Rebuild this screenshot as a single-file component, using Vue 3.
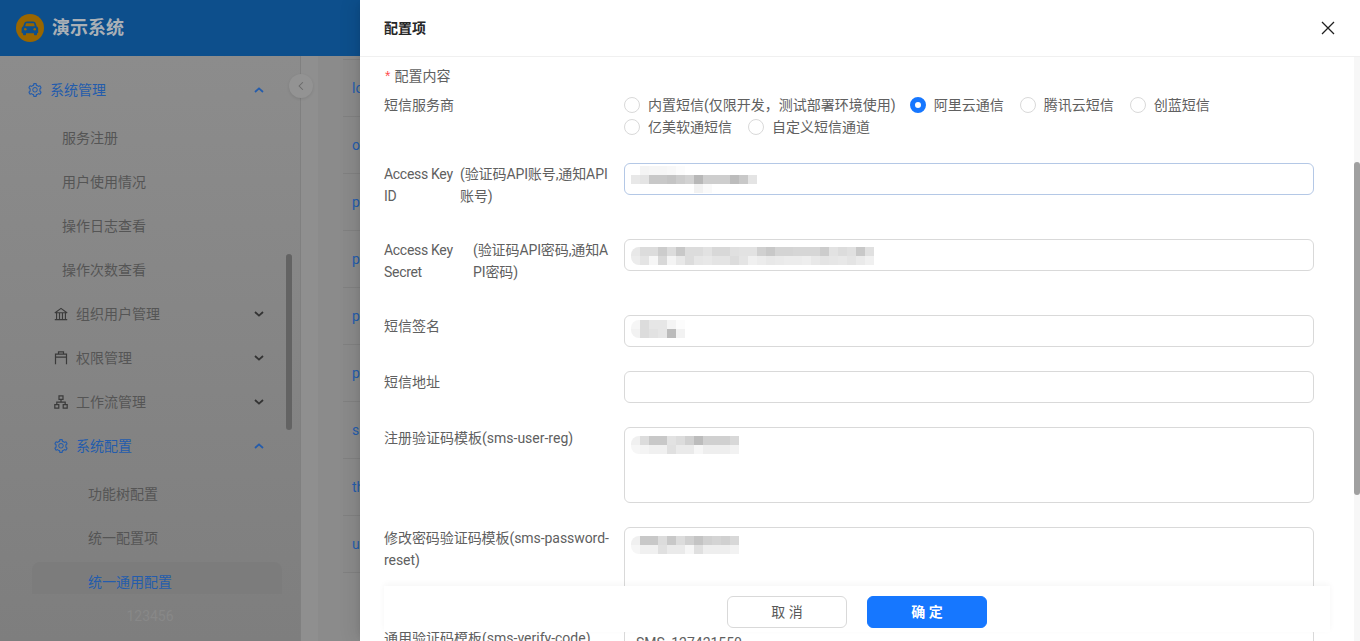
<script setup>
const GEAR = 'M924.8 625.7l-65.5-56c3.1-19 4.7-38.4 4.7-57.8s-1.6-38.8-4.7-57.8l65.5-56a32.03 32.03 0 0 0 9.3-35.2l-.9-2.6a443.74 443.74 0 0 0-79.7-137.9l-1.8-2.1a32.12 32.12 0 0 0-35.1-9.5l-81.3 28.9c-30-24.6-63.5-44-99.7-57.6l-15.7-85a32.05 32.05 0 0 0-25.8-25.7l-2.7-.5c-52.1-9.4-106.9-9.4-159 0l-2.7.5a32.05 32.05 0 0 0-25.8 25.7l-15.8 85.4a351.86 351.86 0 0 0-99 57.4l-81.9-29.1a32 32 0 0 0-35.1 9.5l-1.8 2.1a446.02 446.02 0 0 0-79.7 137.9l-.9 2.6c-4.5 12.5-.8 26.5 9.3 35.2l66.3 56.6c-3.1 18.8-4.6 38-4.6 57.1 0 19.2 1.5 38.4 4.6 57.1L99 625.5a32.03 32.03 0 0 0-9.3 35.2l.9 2.6c18.1 50.4 44.9 96.9 79.7 137.9l1.8 2.1a32.12 32.12 0 0 0 35.1 9.5l81.9-29.1c29.8 24.5 63.1 43.9 99 57.4l15.8 85.4a32.05 32.05 0 0 0 25.8 25.7l2.7.5a449.4 449.4 0 0 0 159 0l2.7-.5a32.05 32.05 0 0 0 25.8-25.7l15.7-85a350 350 0 0 0 99.7-57.6l81.3 28.9a32 32 0 0 0 35.1-9.5l1.8-2.1c34.8-41.1 61.6-87.5 79.7-137.9l.9-2.6c4.5-12.3.8-26.3-9.3-35zM788.3 465.9c2.5 15.1 3.8 30.6 3.8 46.1s-1.3 31-3.8 46.1l-6.6 40.1 74.7 63.9a370.03 370.03 0 0 1-42.6 73.6L721 702.8l-31.4 25.8c-23.9 19.6-50.5 35-79.3 45.8l-38.1 14.3-17.9 97a377.5 377.5 0 0 1-85 0l-17.9-97.2-37.8-14.5c-28.5-10.8-55-26.2-78.7-45.7l-31.4-25.9-93.4 33.2c-17-22.9-31.2-47.6-42.6-73.6l75.5-64.5-6.5-40c-2.4-14.9-3.7-30.3-3.7-45.5 0-15.3 1.2-30.6 3.7-45.5l6.5-40-75.5-64.5c11.3-26.1 25.6-50.7 42.6-73.6l93.4 33.2 31.4-25.9c23.7-19.5 50.2-34.9 78.7-45.7l37.9-14.3 17.9-97.2c28.1-3.2 56.8-3.2 85 0l17.9 97 38.1 14.3c28.7 10.8 55.4 26.2 79.3 45.8l31.4 25.8 92.8-32.9c17 22.9 31.2 47.6 42.6 73.6L781.8 426l6.5 39.9zM512 326c-97.2 0-176 78.8-176 176s78.8 176 176 176 176-78.8 176-176-78.8-176-176-176zm79.2 255.2A111.6 111.6 0 0 1 512 614c-29.9 0-58-11.7-79.2-32.8A111.6 111.6 0 0 1 400 502c0-29.9 11.7-58 32.8-79.2C454 401.6 482.1 390 512 390c29.9 0 58 11.6 79.2 32.8A111.6 111.6 0 0 1 624 502c0 29.9-11.7 58-32.8 79.2z'
const BANK = 'M894 462c30.9 0 43.8-39.7 18.7-58L530.8 126.2a31.81 31.81 0 0 0-37.6 0L111.3 404c-25.1 18.2-12.2 58 18.8 58H192v374h-72c-4.4 0-8 3.6-8 8v52c0 4.4 3.6 8 8 8h784c4.4 0 8-3.6 8-8v-52c0-4.4-3.6-8-8-8h-72V462h62zM512 196.7l271.1 197.2H240.9L512 196.7zM264 462h117v374H264V462zm189 0h117v374H453V462zm307 374H642V462h118v374z'

const menu = [
  { t: '系统管理', level: 0, icon: 'gear', open: true, blue: true },
  { t: '服务注册', level: 1 },
  { t: '用户使用情况', level: 1 },
  { t: '操作日志查看', level: 1 },
  { t: '操作次数查看', level: 1 },
  { t: '组织用户管理', level: 2, icon: 'bank', closed: true },
  { t: '权限管理', level: 2, icon: 'perm', closed: true },
  { t: '工作流管理', level: 2, icon: 'flow', closed: true },
  { t: '系统配置', level: 2, icon: 'gear', open: true, blue: true },
  { t: '功能树配置', level: 3 },
  { t: '统一配置项', level: 3 },
  { t: '统一通用配置', level: 3, active: true }
]
const rows = ['login', 'oss', 'password', 'portal', 'push', 'platform', 'sms', 'theme', 'upload']
const radios = [
  { t: '内置短信(仅限开发，测试部署环境使用)' },
  { t: '阿里云通信', on: true },
  { t: '腾讯云短信' },
  { t: '创蓝短信' },
  { t: '亿美软通短信' },
  { t: '自定义短信通道' }
]
const shade = (v) => `#${v}${v}${v}`
const mosaics = {
  key: [
    ['ff', 'f4', 'f6', 'f6', 'f8', 'fc', 'ff', 'ff', 'ff', 'ff', 'ff', 'ff', 'ff', 'ff'],
    ['e8', 'e4', 'c8', 'c8', 'c4', 'cc', 'd2', 'b8', 'ce', 'ce', 'ce', 'bc', 'c8', 'e4'],
    ['ff', 'ff', 'ff', 'ff', 'ff', 'ff', 'ff', 'f2', 'fa', 'ff', 'ff', 'ff', 'ff', 'ff']
  ],
  secret: [
    ['e8', 'dc', 'dc', 'cc', 'dc', 'c8', 'dc', 'dc', 'e2', 'd8', 'd8', 'e0', 'e2', 'e2', 'd0', 'c8', 'd4', 'd4', 'd6', 'd6', 'd6', 'cc', 'e2', 'dc', 'e0', 'c8', 'e0'],
    ['ec', 'e4', 'f6', 'd8', 'f4', 'e8', 'dc', 'e6', 'e8', 'e4', 'e4', 'dc', 'e4', 'f0', 'ec', 'e8', 'ea', 'ec', 'ec', 'ee', 'e8', 'e4', 'e6', 'e8', 'e4', 'ea', 'f0']
  ],
  sign: [
    ['f6', 'dc', 'e6', 'e6', 'f4', 'fc'],
    ['f2', 'dc', 'e2', 'e6', 'bb', 'f2']
  ],
  tplA: [
    ['f0', 'dc', 'c8', 'c8', 'e2', 'dc', 'd0', 'bc', 'd0', 'd0', 'd0', 'd8'],
    ['f6', 'f4', 'f0', 'f0', 'e0', 'ea', 'ea', 'f6', 'ee', 'ee', 'ee', 'f2']
  ],
  tplB: [
    ['f0', 'c8', 'c8', 'dc', 'c8', 'dc', 'd0', 'c4', 'd0', 'd4', 'd0', 'd8'],
    ['f6', 'f0', 'f0', 'e0', 'ea', 'ea', 'f6', 'e0', 'ee', 'ee', 'ee', 'f2']
  ]
}
</script>

<template>
  <div class="page">
    <header class="topbar">
      <svg class="logo" viewBox="0 0 28 28" width="28" height="28">
        <circle cx="14" cy="14" r="14" fill="#996600" />
        <path d="M8.2 9.6c.4-1.4 1.3-2.2 2.8-2.2h6c1.500 0 2.400.8 2.800 2.200l.9 3c1 .4 1.500 1.200 1.500 2.200v3.600c0 .5-.3.800-.8.800H21v1.300c0 .5-.3.800-.8.800h-1.400c-.5 0-.8-.3-.8-.8v-1.300H10v1.300c0 .5-.3.800-.8.800H7.800c-.5 0-.8-.3-.8-.8v-1.300h-.6c-.5 0-.8-.3-.8-.8v-3.600c0-1 .5-1.800 1.500-2.200z" fill="#0d4f8c" />
        <path d="M10 9.300h8l.8 2.900H9.200z" fill="#996600" />
        <circle cx="9.300" cy="15.300" r="1.300" fill="#996600" />
        <circle cx="18.700" cy="15.300" r="1.300" fill="#996600" />
      </svg>
      <span class="brand">演示系统</span>
    </header>

    <div class="under">
      <aside class="side">
        <nav class="nav">
          <div
            v-for="m in menu"
            :key="m.t"
            class="item"
            :class="['lv' + m.level, { blue: m.blue || m.active, active: m.active, opened: m.open }]"
          >
            <svg v-if="m.icon === 'gear'" class="ico" viewBox="64 64 896 896"><path :d="GEAR" fill="currentColor" /></svg>
            <svg v-else-if="m.icon === 'bank'" class="ico" viewBox="64 64 896 896"><path :d="BANK" fill="currentColor" /></svg>
            <svg v-else-if="m.icon === 'perm'" class="ico" viewBox="0 0 14 14">
              <path d="M4.500 .8h5v2.400h-5zM1.500 13.200V3.200h11v10M1.500 6.200h11" fill="none" stroke="currentColor" stroke-width="1.200" />
            </svg>
            <svg v-else-if="m.icon === 'flow'" class="ico" viewBox="0 0 14 14">
              <path d="M5 .8h4v3.600H5zM.8 9.600h4v3.600h-4zM9.200 9.600h4v3.600h-4zM7 4.400v2.800M2.800 9.600V7.200h8.400v2.400" fill="none" stroke="currentColor" stroke-width="1.200" />
            </svg>
            <span class="label">{{ m.t }}</span>
            <svg v-if="m.open || m.closed" class="chev" viewBox="0 0 10 6" :class="{ up: m.open }">
              <path d="M1 1l4 3.600L9 1" fill="none" stroke="currentColor" stroke-width="1.800" />
            </svg>
          </div>
        </nav>
        <div class="version">123456</div>
        <div class="side-thumb"></div>
      </aside>
      <main class="main">
        <button class="collapse" type="button" aria-label="collapse">
          <svg viewBox="0 0 8 12" width="6" height="10"><path d="M6.500 1L1.500 6l5 5" fill="none" stroke="#6a6a6a" stroke-width="1.400" /></svg>
        </button>
        <div class="table">
          <div v-for="r in rows" :key="r" class="tr">{{ r }}</div>
        </div>
      </main>
    </div>

    <section class="drawer">
      <div class="drawer-head">
        <span class="title">配置项</span>
        <svg class="close" viewBox="0 0 14 14" width="14" height="14"><path d="M1 1l12 12M13 1L1 13" fill="none" stroke="#1f1f1f" stroke-width="1.300" /></svg>
      </div>
      <div class="drawer-body">
        <div class="form">
          <div class="req"><i>*</i>配置内容</div>

          <div class="row radios-row">
            <div class="lab">短信服务商</div>
            <div class="ctl radios">
              <label v-for="r in radios" :key="r.t" class="radio">
                <span class="dot" :class="{ on: r.on }"></span>
                <span class="rtext">{{ r.t }}</span>
              </label>
            </div>
          </div>

          <div class="row">
            <div class="lab split">
              <span class="s1 w1">Access Key<br />ID</span>
              <span class="s2">(验证码API账号,通知API<br />账号)</span>
            </div>
            <div class="ctl">
              <div class="input focus">
                <div class="mosaic">
                  <div v-for="(l, n) in mosaics.key" :key="n" class="mline">
                    <span v-for="(c, i) in l" :key="i" class="cell" :style="{ background: shade(c) }"></span>
                  </div>
                </div>
              </div>
            </div>
          </div>

          <div class="row">
            <div class="lab split">
              <span class="s1 w2">Access Key<br />Secret</span>
              <span class="s2">(验证码API密码,通知A<br />PI密码)</span>
            </div>
            <div class="ctl">
              <div class="input">
                <div class="mosaic">
                  <div v-for="(l, n) in mosaics.secret" :key="n" class="mline">
                    <span v-for="(c, i) in l" :key="i" class="cell" :style="{ background: shade(c) }"></span>
                  </div>
                </div>
              </div>
            </div>
          </div>

          <div class="row">
            <div class="lab">短信签名</div>
            <div class="ctl">
              <div class="input">
                <div class="mosaic m-sign">
                  <div v-for="(l, n) in mosaics.sign" :key="n" class="mline">
                    <span v-for="(c, i) in l" :key="i" class="cell" :style="{ background: shade(c) }"></span>
                  </div>
                </div>
              </div>
            </div>
          </div>

          <div class="row">
            <div class="lab">短信地址</div>
            <div class="ctl"><div class="input"></div></div>
          </div>

          <div class="row">
            <div class="lab">注册验证码模板(sms-user-reg)</div>
            <div class="ctl">
              <div class="input area">
                <div class="mosaic">
                  <div v-for="(l, n) in mosaics.tplA" :key="n" class="mline">
                    <span v-for="(c, i) in l" :key="i" class="cell" :style="{ background: shade(c) }"></span>
                  </div>
                </div>
              </div>
            </div>
          </div>

          <div class="row">
            <div class="lab tight">修改密码验证码模板(sms-password-<br />reset)</div>
            <div class="ctl">
              <div class="input area">
                <div class="mosaic">
                  <div v-for="(l, n) in mosaics.tplB" :key="n" class="mline">
                    <span v-for="(c, i) in l" :key="i" class="cell" :style="{ background: shade(c) }"></span>
                  </div>
                </div>
              </div>
            </div>
          </div>

          <div class="row">
            <div class="lab">通用验证码模板(sms-verify-code)</div>
            <div class="ctl"><div class="input plain">SMS_127421550</div></div>
          </div>
        </div>
        <div class="vbar"><div class="vthumb"></div></div>
      </div>
      <div class="footer">
        <button class="btn" type="button">取 消</button>
        <button class="btn primary" type="button">确 定</button>
      </div>
    </section>
  </div>
</template>

<style scoped>
.page {
  position: relative;
  width: 1360px;
  height: 641px;
  overflow: hidden;
  display: flex;
  flex-direction: column;
  background: #8a8a8a;
  font-family: Roboto, "Noto Sans CJK SC", sans-serif;
  font-size: 14px;
  line-height: 22px;
  color: #606060;
}
.topbar {
  flex: none;
  height: 56px;
  background: #0d4f8c;
  display: flex;
  align-items: center;
  gap: 8px;
  padding-left: 16px;
  box-sizing: border-box;
}
.brand {
  font-size: 18px;
  font-weight: 700;
  color: #aab0b6;
}
.under {
  flex: 1;
  min-height: 0;
  display: flex;
}
.side {
  position: relative;
  width: 300px;
  flex: none;
  background: linear-gradient(#8c8c8c, #7e7e7e);
  display: flex;
  flex-direction: column;
  border-right: 1px solid #808080;
}
.nav {
  height: 538px;
  overflow: hidden;
  padding: 14px 18px 0 32px;
  box-sizing: border-box;
  flex: none;
}
.item {
  height: 40px;
  margin-bottom: 4px;
  margin-left: -32px;
  display: flex;
  align-items: center;
  box-sizing: border-box;
  color: #555;
  border-radius: 8px;
}
.item.opened { margin-bottom: 8px; }
.lv0 { padding-left: 28px; width: 268px; }
.lv1 { padding-left: 62px; width: 250px; }
.lv2 { padding-left: 54px; width: 268px; }
.lv3 { padding-left: 88px; width: 250px; }
.item.blue { color: #245cac; }
.lv3.active {
  margin-left: 0;
  padding-left: 56px;
  background: #7c7c7c;
}
.ico {
  width: 14px;
  height: 14px;
  margin-right: 8px;
  flex: none;
  color: #3a3a3a;
}
.item.blue .ico { color: #245cac; }
.chev {
  width: 10px;
  height: 6px;
  margin-left: auto;
  margin-right: 4px;
  color: #333;
}
.chev.up { transform: rotate(180deg); color: #245cac; }
.version {
  flex: 1;
  text-align: center;
  color: #888;
  padding-top: 11px;
}
.side-thumb {
  position: absolute;
  left: 286px;
  top: 198px;
  width: 6px;
  height: 176px;
  border-radius: 3px;
  background: #636363;
}
.main {
  position: relative;
  flex: 1;
  background: linear-gradient(90deg, #8f8f8f 0 17px, #8b8b8b 17px);
  padding: 3px 0 0 42px;
}
.collapse {
  position: absolute;
  left: -12px;
  top: 18px;
  width: 24px;
  height: 24px;
  border: 0;
  border-radius: 50%;
  background: #939393;
  padding: 0;
  display: flex;
  align-items: center;
  justify-content: center;
  box-shadow: 0 1px 3px rgba(0, 0, 0, .1);
}
.table {
  border-top: 1px solid #808080;
  background: #8a8a8a;
}
.tr {
  height: 57px;
  box-sizing: border-box;
  border-bottom: 1px solid #808080;
  padding-left: 9px;
  display: flex;
  align-items: center;
  color: #245cac;
}
.drawer {
  position: absolute;
  right: 0;
  top: 0;
  bottom: 0;
  width: 1000px;
  background: #fff;
  box-shadow: -6px 0 16px rgba(0, 0, 0, .08), -3px 0 6px -4px rgba(0, 0, 0, .12);
  display: flex;
  flex-direction: column;
}
.drawer-head {
  flex: none;
  height: 57px;
  box-sizing: border-box;
  border-bottom: 1px solid #f0f0f0;
  display: flex;
  align-items: center;
  justify-content: space-between;
  padding: 0 25px 0 24px;
}
.title {
  font-weight: 600;
  color: #262626;
}
.drawer-body {
  position: relative;
  flex: 1;
  min-height: 0;
  overflow: hidden;
}
.form {
  width: 930px;
  padding: 8px 0 0 24px;
}
.req {
  height: 22px;
  margin-bottom: 7px;
}
.req i {
  font-style: normal;
  color: #ff4d4f;
  font-family: "Liberation Sans", sans-serif;
  margin: 0 4px 0 1px;
}
.row {
  display: flex;
  gap: 16px;
  margin-bottom: 24px;
}
.radios-row { margin-bottom: 25px; }
.lab {
  width: 224px;
  flex: none;
  padding-bottom: 8px;
  white-space: nowrap;
}
.lab.tight { letter-spacing: -.06px; }
.split { display: flex; }
.s1 { letter-spacing: -.3px; flex: none; }
.s1.w1 { width: 76px; }
.s1.w2 { width: 89px; }
.s2 { flex: 1; letter-spacing: -.1px; }
.ctl {
  flex: 1;
  min-width: 0;
}
.radios {
  display: flex;
  flex-wrap: wrap;
  align-content: flex-start;
}
.radio {
  display: inline-flex;
  align-items: center;
  margin-right: 8px;
  height: 22px;
}
.radio:first-child { margin-right: 6px; }
.dot {
  width: 16px;
  height: 16px;
  box-sizing: border-box;
  border: 1px solid #d9d9d9;
  border-radius: 50%;
  background: #fff;
  flex: none;
}
.dot.on { border: 5px solid #1677ff; }
.rtext { padding: 0 8px; }
.input {
  height: 32px;
  box-sizing: border-box;
  border: 1px solid #d9d9d9;
  border-radius: 6px;
  padding: 7px 0 0 6px;
  background: #fff;
}
.input.focus { border-color: #b4c8e6; padding-top: 2px; }
.input.area { height: 76px; padding-top: 8px; }
.input.plain { padding: 4px 11px; }
.mosaic {
  display: flex;
  flex-direction: column;
  width: fit-content;
  border-radius: 8px 0 0 8px;
  overflow: hidden;
}
.m-sign { margin-top: -3px; }
.mline { display: flex; height: 9px; }
.cell {
  width: 9px;
  height: 9px;
  flex: none;
}
.vbar {
  position: absolute;
  right: 0;
  top: 0;
  bottom: 0;
  width: 6px;
  background: #f7f7f7;
}
.vthumb {
  position: absolute;
  top: 105px;
  left: 0;
  width: 6px;
  height: 333px;
  border-radius: 3px;
  background: #a0a0a0;
}
.footer {
  position: absolute;
  left: 24px;
  width: 946px;
  top: 586px;
  height: 46px;
  padding-top: 10px;
  box-sizing: border-box;
  background: #fff;
  box-shadow: 0 -2px 6px rgba(0, 0, 0, .04);
  display: flex;
  justify-content: center;
  gap: 20px;
  z-index: 2;
}
.btn {
  width: 120px;
  height: 32px;
  box-sizing: border-box;
  border: 1px solid #d9d9d9;
  border-radius: 6px;
  background: #fff;
  color: #595959;
  font: inherit;
  padding: 0;
}
.btn.primary {
  background: #1677ff;
  border-color: #1677ff;
  color: #fff;
  font-weight: 600;
}
</style>
